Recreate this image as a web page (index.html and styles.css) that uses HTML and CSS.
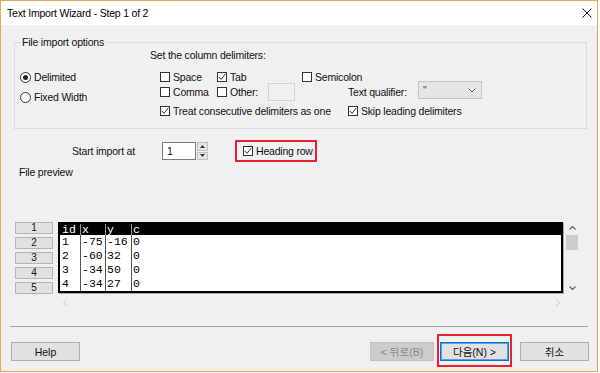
FILE: index.html
```html
<!DOCTYPE html>
<html lang="en">

<head>
    <meta charset="UTF-8">
    <title>Text Import Wizard</title>
    <link rel="stylesheet" href="styles.css">
</head>

<body>
    <div class="window">
        <div class="titlebar">
            <span class="title">Text Import Wizard - Step 1 of 2</span>
            <svg class="close" width="10" height="10" viewBox="0 0 10 10">
                <path d="M0.5 0.5 L9.5 9.5 M9.5 0.5 L0.5 9.5" stroke="#111" stroke-width="1" fill="none"/>
            </svg>
        </div>

        <div class="dialog">
            <div class="group">
                <span class="legend">File import options</span>
                <div class="radios">
                    <div class="opt"><span class="radio on"></span>Delimited</div>
                    <div class="opt"><span class="radio"></span>Fixed Width</div>
                </div>
                <div class="delims">
                    <div class="delims-title">Set the column delimiters:</div>
                    <div class="delim-grid">
                        <div class="opt"><span class="check"></span>Space</div>
                        <div class="opt"><span class="check on"><svg width="8" height="8" viewBox="0 0 8 8"><path d="M0.8 4 L3 6.4 L7.4 0.8" stroke="#333" stroke-width="1" fill="none"/></svg></span>Tab</div>
                        <div></div>
                        <div class="opt span2"><span class="check"></span>Semicolon</div>
                        <div></div>

                        <div class="opt"><span class="check"></span>Comma</div>
                        <div class="opt"><span class="check"></span>Other:</div>
                        <div class="other-input"></div>
                        <div></div>
                        <div class="opt">Text qualifier:</div>
                        <div class="select">
                            <span>"</span>
                            <svg width="8" height="5" viewBox="0 0 8 5"><path d="M0.5 0.5 L4 4 L7.5 0.5" stroke="#555" stroke-width="1" fill="none"/></svg>
                        </div>

                        <div class="opt span4"><span class="check on"><svg width="8" height="8" viewBox="0 0 8 8"><path d="M0.8 4 L3 6.4 L7.4 0.8" stroke="#333" stroke-width="1" fill="none"/></svg></span>Treat consecutive delimiters as one</div>
                        <div class="opt span2"><span class="check on"><svg width="8" height="8" viewBox="0 0 8 8"><path d="M0.8 4 L3 6.4 L7.4 0.8" stroke="#333" stroke-width="1" fill="none"/></svg></span>Skip leading delimiters</div>
                    </div>
                </div>
            </div>

            <div class="start-row">
                <span class="start-label">Start import at</span>
                <div class="spinner">
                    <div class="spin-input">1</div>
                    <div class="spin-buttons">
                        <div class="spin-btn"><svg width="5" height="3" viewBox="0 0 5 3"><path d="M0 3 L2.5 0 L5 3 Z" fill="#333"/></svg></div>
                        <div class="spin-btn"><svg width="5" height="3" viewBox="0 0 5 3"><path d="M0 0 L2.5 3 L5 0 Z" fill="#333"/></svg></div>
                    </div>
                </div>
                <div class="heading-box">
                    <div class="opt"><span class="check on"><svg width="8" height="8" viewBox="0 0 8 8"><path d="M0.8 4 L3 6.4 L7.4 0.8" stroke="#333" stroke-width="1" fill="none"/></svg></span>Heading row</div>
                </div>
            </div>

            <div class="preview-title">File preview</div>

            <div class="preview">
                <div class="row-heads">
                    <div class="row-head">1</div>
                    <div class="row-head">2</div>
                    <div class="row-head">3</div>
                    <div class="row-head">4</div>
                    <div class="row-head">5</div>
                </div>
                <div class="table">
                    <div class="trow head"><span>id</span><span>x</span><span>y</span><span>c</span></div>
                    <div class="trow"><span>1</span><span>-75</span><span>-16</span><span>0</span></div>
                    <div class="trow"><span>2</span><span>-60</span><span>32</span><span>0</span></div>
                    <div class="trow"><span>3</span><span>-34</span><span>50</span><span>0</span></div>
                    <div class="trow"><span>4</span><span>-34</span><span>27</span><span>0</span></div>
                </div>
                <div class="vscroll">
                    <svg class="arrow-up" width="7" height="4" viewBox="0 0 7 4"><path d="M0.5 3.5 L3.5 0.5 L6.5 3.5" stroke="#606060" stroke-width="1.2" fill="none"/></svg>
                    <div class="thumb"></div>
                    <svg class="arrow-down" width="7" height="4" viewBox="0 0 7 4"><path d="M0.5 0.5 L3.5 3.5 L6.5 0.5" stroke="#606060" stroke-width="1.2" fill="none"/></svg>
                </div>
            </div>

            <div class="hscroll">
                <svg width="4" height="7" viewBox="0 0 4 7"><path d="M3.5 0.5 L0.5 3.5 L3.5 6.5" stroke="#c4c4c4" stroke-width="1" fill="none"/></svg>
                <svg width="4" height="7" viewBox="0 0 4 7"><path d="M0.5 0.5 L3.5 3.5 L0.5 6.5" stroke="#c4c4c4" stroke-width="1" fill="none"/></svg>
            </div>

            <div class="separator"></div>

            <div class="footer">
                <div class="btn help">Help</div>
                <div class="btn back">&lt; 뒤로(B)</div>
                <div class="highlight">
                    <div class="btn next">다음(N) &gt;</div>
                </div>
                <div class="btn cancel">취소</div>
            </div>
        </div>
    </div>
</body>

</html>
```

FILE: styles.css
```css
body,
html {
    margin: 0;
    padding: 0;
    background: #fff;
    font-family: "Liberation Sans", "Noto Sans CJK KR", sans-serif;
    font-size: 10.5px;
    letter-spacing: -0.2px;
    color: #111;
}

.window {
    width: 598px;
    height: 372px;
    box-sizing: border-box;
    border: 1px solid #e9a55a;
    background: #f0f0f0;
    display: flex;
    flex-direction: column;
}

.titlebar {
    height: 24px;
    flex-shrink: 0;
    background: #fff;
    display: flex;
    align-items: center;
    justify-content: space-between;
    padding: 0 5px 0 6px;
}

.title {
    line-height: 14px;
    color: #000;
}

.dialog {
    flex-grow: 1;
    padding: 17px 8px 0 13px;
    display: flex;
    flex-direction: column;
}

/* group box */
.group {
    position: relative;
    width: 573px;
    height: 87px;
    box-sizing: border-box;
    border: 1px solid #dcdcdc;
    display: flex;
}

.legend {
    position: absolute;
    left: 5px;
    top: -8px;
    padding: 0 2px;
    line-height: 14px;
    background: #f0f0f0;
}

.radios {
    width: 135px;
    box-sizing: border-box;
    padding: 27px 0 0 5px;
    display: flex;
    flex-direction: column;
    gap: 6px;
}

.opt {
    display: flex;
    align-items: center;
    gap: 3px;
    line-height: 14px;
    height: 14px;
    white-space: nowrap;
}

.radio {
    width: 11px;
    height: 11px;
    box-sizing: border-box;
    border: 1px solid #333;
    border-radius: 50%;
    background: #fff;
    display: flex;
    align-items: center;
    justify-content: center;
}

.radio.on::after {
    content: "";
    width: 5px;
    height: 5px;
    border-radius: 50%;
    background: #222;
}

.check {
    width: 10px;
    height: 10px;
    box-sizing: border-box;
    border: 1px solid #333;
    background: #fff;
    display: flex;
    align-items: center;
    justify-content: center;
    flex-shrink: 0;
}

.delims {
    padding-top: 5px;
}

.delims-title {
    line-height: 14px;
}

.delim-grid {
    margin: 9px 0 0 10px;
    display: grid;
    grid-template-columns: 57px 51px 34px 46px 70px 64px;
    grid-template-rows: 12px 18px 19px;
    align-items: center;
}

.span2 {
    grid-column: span 2;
}

.span4 {
    grid-column: span 4;
}

.other-input {
    width: 27px;
    height: 18px;
    box-sizing: border-box;
    border: 1px solid #d2d2d2;
    background: #f0f0f0;
}

.select {
    align-self: start;
    margin-top: -2px;
    width: 64px;
    height: 18px;
    box-sizing: border-box;
    border: 1px solid #c4c4c4;
    background: #e6e6e6;
    display: flex;
    align-items: center;
    justify-content: space-between;
    padding: 0 5px 0 4px;
    font-size: 10px;
    color: #444;
}

/* start import row */
.start-row {
    margin-top: 11px;
    height: 22px;
    display: flex;
    align-items: center;
}

.start-label {
    margin-left: 58px;
    width: 90px;
    line-height: 14px;
}

.spinner {
    display: flex;
    height: 18px;
}

.spin-input {
    width: 34px;
    box-sizing: border-box;
    border: 1px solid #7a7a7a;
    background: #fff;
    padding-left: 4px;
    line-height: 16px;
}

.spin-buttons {
    width: 11px;
    margin-left: 1px;
    display: flex;
    flex-direction: column;
    gap: 1px;
}

.spin-btn {
    flex-grow: 1;
    background: #e5e5e5;
    border: 1px solid #c0c0c0;
    display: flex;
    align-items: center;
    justify-content: center;
}

.heading-box {
    margin-left: 27px;
    width: 82px;
    height: 22px;
    box-sizing: border-box;
    border: 2px solid #e8212e;
    padding-left: 6px;
    display: flex;
    align-items: center;
}

.preview-title {
    margin-top: 3px;
    padding-left: 5px;
    line-height: 14px;
}

/* preview */
.preview {
    margin-top: 43px;
    padding-left: 1px;
    display: flex;
    height: 72px;
}

.row-heads {
    width: 38px;
    display: flex;
    flex-direction: column;
    gap: 3px;
}

.row-head {
    height: 12px;
    box-sizing: border-box;
    border: 1px solid #b4b4b4;
    background: #e1e1e1;
    font-size: 10px;
    line-height: 10px;
    text-align: center;
}

.table {
    margin-left: 5px;
    width: 505px;
    height: 71px;
    box-sizing: border-box;
    border: 2px solid #000;
    box-shadow: 1px 1px 0 #a8a8a8;
    background: #fff;
    font-family: "Liberation Mono", "DejaVu Sans Mono", monospace;
    font-size: 11.5px;
    letter-spacing: 0;
    color: #000;
}

.trow {
    display: grid;
    grid-template-columns: 20px 25px 26px 1fr;
    height: 14px;
    line-height: 14px;
}

.trow.head {
    height: 11px;
    line-height: 12px;
    background: #000;
    color: #fff;
}

.trow span {
    padding-left: 2px;
    white-space: nowrap;
    overflow: hidden;
}

.trow span + span {
    border-left: 1px solid #555;
    padding-left: 1px;
}

.trow.head span + span {
    border-left-color: #9a9a9a;
}

.vscroll {
    margin-left: 3px;
    width: 12px;
    display: flex;
    flex-direction: column;
    align-items: center;
}

.arrow-up {
    margin-top: 4px;
}

.thumb {
    margin-top: 5px;
    width: 12px;
    height: 15px;
    background: #cdcdcd;
}

.arrow-down {
    margin-top: auto;
    margin-bottom: 4px;
}

.hscroll {
    margin-top: 4px;
    padding-left: 49px;
    width: 497px;
    height: 8px;
    display: flex;
    justify-content: space-between;
    align-items: center;
}

.separator {
    margin: 20px 0 0 -4px;
    width: 578px;
    height: 1px;
    background: #a6a6a6;
}

/* buttons */
.footer {
    margin-top: 7px;
    display: flex;
    align-items: flex-start;
}

.btn {
    height: 19px;
    box-sizing: border-box;
    border: 1px solid #adadad;
    background: #e1e1e1;
    display: flex;
    align-items: center;
    justify-content: center;
    white-space: nowrap;
    letter-spacing: 0;
}

.help {
    margin: 8px 0 0 -3px;
    width: 69px;
}

.back {
    margin: 8px 0 0 auto;
    width: 64px;
    background: #cccccc;
    border-color: #c4c4c4;
    color: #8a8a8a;
}

.highlight {
    margin-left: 3px;
    width: 75px;
    height: 33px;
    box-sizing: border-box;
    border: 2px solid #e8212e;
    padding: 6px 1px 4px 1px;
}

.next {
    width: 69px;
    border: 1px solid #0078d7;
    box-shadow: inset 0 0 0 1px #5aa0e0;
}

.cancel {
    margin: 8px 0 0 8px;
    width: 69px;
}
```
